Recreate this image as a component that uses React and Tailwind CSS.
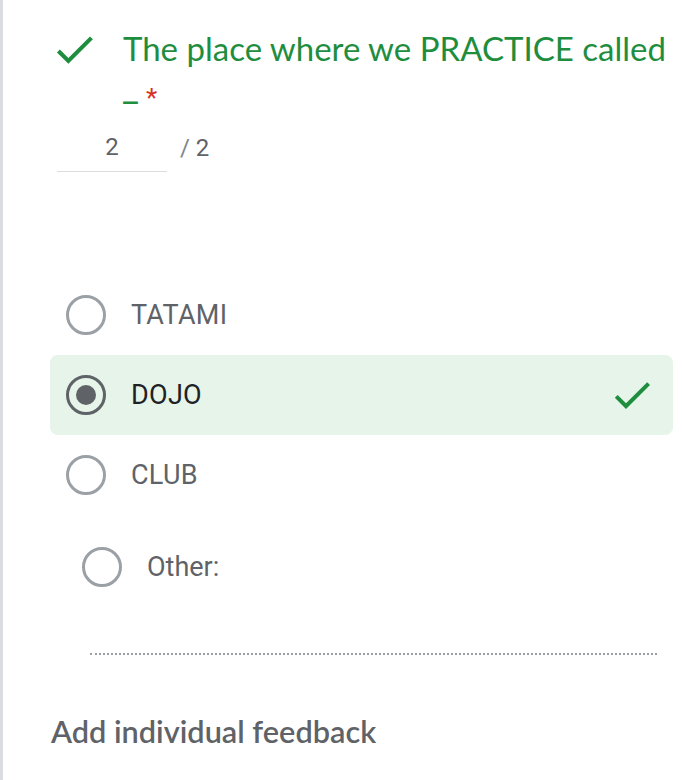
function Check({ className }) {
  return (
    <svg viewBox="0 0 24 24" className={className} fill="#1e8e3e">
      <path d="M9 16.17L4.83 12l-1.42 1.41L9 19 21 7l-1.41-1.41z" />
    </svg>
  );
}

function Radio({ selected }) {
  return (
    <div
      className={[
        "flex h-[40px] w-[40px] shrink-0 items-center justify-center rounded-full border-[3px]",
        selected ? "border-[#5f6368]" : "border-[#9aa0a6]",
      ].join(" ")}
    >
      {selected && <div className="h-[20px] w-[20px] rounded-full bg-[#5f6368]" />}
    </div>
  );
}

const options = [
  { label: "TATAMI" },
  { label: "DOJO", selected: true },
  { label: "CLUB" },
];

export default function App() {
  return (
    <div
      className="h-[780px] w-[682px] overflow-hidden border-l-[3px] border-[#dadce0] bg-white"
      style={{ fontFamily: "Roboto, 'Noto Sans', sans-serif" }}
    >
      {/* title */}
      <div className="flex pl-[47px] pt-[25px]">
        <Check className="h-[49px] w-[49px] shrink-0" />
        <div
          className="ml-[24px] whitespace-nowrap text-[33px] leading-[46px] text-[#1e8e3e]"
          style={{ fontFamily: "Lato, Roboto, sans-serif" }}
        >
          The place where we PRACTICE called
          <div className="leading-[40px]" style={{ fontFamily: "Roboto, sans-serif" }}>
            _ <span className="relative top-[5px] text-[26px] text-[#d93025]">*</span>
          </div>
        </div>
      </div>

      {/* score */}
      <div className="mt-[20px] flex items-end pl-[54px]">
        <div className="w-[110px] border-b border-[#dadce0] pb-[10px] text-center text-[24px] leading-[28px] text-[#5f6368]">
          2
        </div>
        <div className="ml-[13px] pb-[10px] text-[24px] leading-[28px] text-[#5f6368]">
          <span className="text-[#80868b]">/</span> 2
        </div>
      </div>

      {/* options */}
      <div className="mt-[103px] pl-[47px] pr-[9px]">
        {options.map((o) => (
          <div
            key={o.label}
            className={[
              "flex h-[80px] items-center rounded-lg pl-[16px] pr-[17px]",
              o.selected ? "bg-[#e6f4ea]" : "",
            ].join(" ")}
          >
            <Radio selected={o.selected} />
            <div
              className={[
                "ml-[25px] flex-1 text-[27px] tracking-[0.3px]",
                o.selected ? "text-[#202124]" : "text-[#5f6368]",
              ].join(" ")}
            >
              {o.label}
            </div>
            {o.selected && <Check className="h-[48px] w-[48px]" />}
          </div>
        ))}

        <div className="mt-[12px] flex h-[80px] items-center pl-[32px]">
          <Radio />
          <div className="ml-[25px] text-[27px] text-[#5f6368]">Other:</div>
        </div>

        <div className="ml-[40px] mr-[16px] mt-[46px] border-b-2 border-dotted border-[#9aa0a6]" />
      </div>

      {/* feedback */}
      <div
        className="mt-[54px] pl-[48px] text-[30.7px] font-semibold text-[#5f6368]"
        style={{ fontFamily: "Lato, Roboto, sans-serif" }}
      >
        Add individual feedback
      </div>
    </div>
  );
}
